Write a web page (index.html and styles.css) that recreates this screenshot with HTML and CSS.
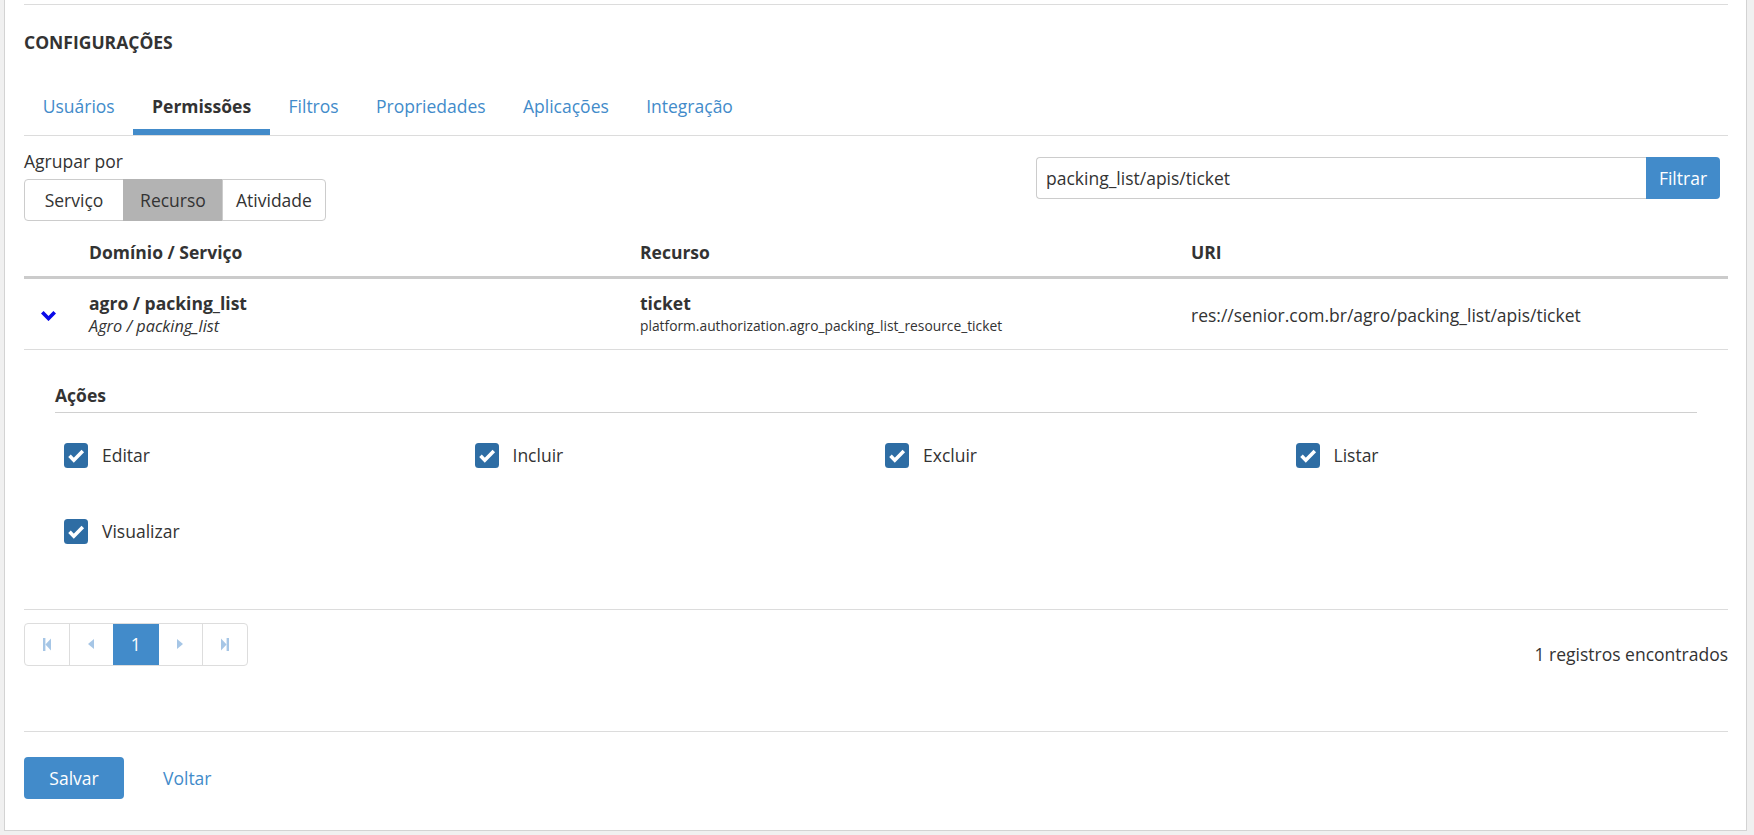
FILE: index.html
```html
<!DOCTYPE html>
<html lang="pt-BR">
<head>
<meta charset="utf-8">
<title>Configurações</title>
<link rel="stylesheet" href="styles.css">
</head>
<body>
<div class="panel">
  <div class="section">
    <h2 class="title">CONFIGURAÇÕES</h2>
    <nav class="tabs">
      <a class="tab">Usuários</a>
      <a class="tab active">Permissões</a>
      <a class="tab">Filtros</a>
      <a class="tab">Propriedades</a>
      <a class="tab">Aplicações</a>
      <a class="tab">Integração</a>
    </nav>

    <div class="toolbar">
      <div class="group-col">
        <div class="group-label">Agrupar por</div>
        <div class="btn-group">
          <span class="seg">Serviço</span>
          <span class="seg selected">Recurso</span>
          <span class="seg">Atividade</span>
        </div>
      </div>
      <div class="search">
        <div class="search-input">packing_list/apis/ticket</div>
        <span class="search-btn">Filtrar</span>
      </div>
    </div>

    <table class="grid">
      <colgroup>
        <col class="c-toggle">
        <col class="c-dom">
        <col class="c-res">
        <col>
      </colgroup>
      <thead>
        <tr>
          <th></th>
          <th>Domínio / Serviço</th>
          <th>Recurso</th>
          <th>URI</th>
        </tr>
      </thead>
      <tbody>
        <tr class="row">
          <td class="toggle">
            <svg class="chev" width="15" height="10" viewBox="0 0 15 10"><polygon points="0,2.6 2.6,0 7.5,4.9 12.4,0 15,2.6 7.5,10.1" fill="#0a0ae8"/></svg>
          </td>
          <td>
            <div class="strong">agro / packing_list</div>
            <div class="sub-it">Agro / packing_list</div>
          </td>
          <td>
            <div class="strong">ticket</div>
            <div class="sub-sm">platform.authorization.agro_packing_list_resource_ticket</div>
          </td>
          <td class="uri">res://senior.com.br/agro/packing_list/apis/ticket</td>
        </tr>
        <tr class="detail">
          <td colspan="4">
            <div class="detail-title">Ações</div>
            <div class="actions-grid">
              <label class="chk"><svg class="box" width="24" height="25" viewBox="0 0 24 25"><rect width="24" height="25" rx="3.5" fill="#2e6da4"/><polyline points="5.5,12.8 9.8,17.2 18.8,8" fill="none" stroke="#fff" stroke-width="3.6"/></svg><span>Editar</span></label>
              <label class="chk"><svg class="box" width="24" height="25" viewBox="0 0 24 25"><rect width="24" height="25" rx="3.5" fill="#2e6da4"/><polyline points="5.5,12.8 9.8,17.2 18.8,8" fill="none" stroke="#fff" stroke-width="3.6"/></svg><span>Incluir</span></label>
              <label class="chk"><svg class="box" width="24" height="25" viewBox="0 0 24 25"><rect width="24" height="25" rx="3.5" fill="#2e6da4"/><polyline points="5.5,12.8 9.8,17.2 18.8,8" fill="none" stroke="#fff" stroke-width="3.6"/></svg><span>Excluir</span></label>
              <label class="chk"><svg class="box" width="24" height="25" viewBox="0 0 24 25"><rect width="24" height="25" rx="3.5" fill="#2e6da4"/><polyline points="5.5,12.8 9.8,17.2 18.8,8" fill="none" stroke="#fff" stroke-width="3.6"/></svg><span>Listar</span></label>
              <label class="chk"><svg class="box" width="24" height="25" viewBox="0 0 24 25"><rect width="24" height="25" rx="3.5" fill="#2e6da4"/><polyline points="5.5,12.8 9.8,17.2 18.8,8" fill="none" stroke="#fff" stroke-width="3.6"/></svg><span>Visualizar</span></label>
            </div>
          </td>
        </tr>
      </tbody>
    </table>

    <div class="footer">
      <ul class="pager">
        <li><svg width="8" height="13" viewBox="0 0 8 13"><rect x="0" y="0" width="2.4" height="13" fill="#a6c6e6"/><polygon points="2.4,6.5 8,0.5 8,12.5" fill="#a6c6e6"/></svg></li>
        <li><svg width="6" height="10" viewBox="0 0 6 10"><polygon points="0,5 6,0 6,10" fill="#a6c6e6"/></svg></li>
        <li class="current">1</li>
        <li><svg width="6" height="10" viewBox="0 0 6 10"><polygon points="6,5 0,0 0,10" fill="#a6c6e6"/></svg></li>
        <li><svg width="8" height="13" viewBox="0 0 8 13"><rect x="5.6" y="0" width="2.4" height="13" fill="#a6c6e6"/><polygon points="5.6,6.5 0,0.5 0,12.5" fill="#a6c6e6"/></svg></li>
      </ul>
      <div class="count">1 registros encontrados</div>
    </div>

    <div class="form-actions">
      <span class="btn-primary">Salvar</span>
      <a class="link">Voltar</a>
    </div>
  </div>
</div>
</body>
</html>
```

FILE: styles.css
```css
* { box-sizing: border-box; }

html, body { height: 100%; }

body {
  margin: 0;
  padding: 0 7px 4px 4px;
  background: #f0f0f0;
  font-family: "Open Sans", "Liberation Sans", sans-serif;
  font-size: 17.5px;
  line-height: 24px;
  color: #333;
  overflow: hidden;
}

.panel {
  background: #fff;
  border: 1px solid #d3d3d3;
  border-top: 0;
  padding: 4px 18px 31px 19px;
}

.section {
  border-top: 1px solid #dcdcdc;
}

.title {
  margin: 0;
  padding-top: 25px;
  font-size: 17.5px;
  line-height: 24px;
  font-weight: 700;
  color: #333;
}

.tabs {
  display: flex;
  margin-top: 28px;
  border-bottom: 1px solid #dcdcdc;
}

.tab {
  padding: 11.5px 18.7px 11px;
  border-bottom: 6px solid transparent;
  color: #428bca;
  cursor: pointer;
}

.tab.active {
  color: #333;
  font-weight: 700;
  border-bottom-color: #428bca;
}

.toolbar {
  display: flex;
  align-items: flex-start;
  justify-content: space-between;
}

.group-col {
  padding-top: 13px;
}

.group-label {
  line-height: 24px;
}

.btn-group {
  display: flex;
  margin-top: 6px;
}

.seg {
  min-width: 100px;
  height: 42px;
  padding: 8px 13px;
  border: 1px solid #cccccc;
  text-align: center;
  background: #fff;
  color: #333;
}

.seg + .seg { margin-left: -1px; }

.seg:first-child { border-radius: 4px 0 0 4px; }
.seg:last-child { border-radius: 0 4px 4px 0; }

.seg.selected {
  background: #b3b3b3;
  border-color: #b3b3b3;
}

.search {
  display: flex;
  width: 684px;
  margin-top: 21px;
  margin-right: 8px;
}

.search-input {
  flex: 1;
  height: 42px;
  padding: 8px 9px;
  border: 1px solid #cccccc;
  border-right: 0;
  border-radius: 4px 0 0 4px;
  color: #333;
}

.search-btn {
  width: 74px;
  height: 42px;
  padding: 9px 0;
  background: #428bca;
  color: #fff;
  text-align: center;
  border-radius: 0 4px 4px 0;
}

.grid {
  width: 100%;
  margin-top: 7px;
  border-collapse: collapse;
  table-layout: fixed;
}

.c-toggle { width: 55px; }
.c-dom { width: 551px; }
.c-res { width: 551px; }

.grid th {
  text-align: left;
  font-weight: 700;
  padding: 12px 10px;
  border-bottom: 3px solid #cbcbcb;
}

.grid td {
  padding: 12px 10px;
  vertical-align: middle;
}

.row td {
  border-bottom: 1px solid #dcdcdc;
}

.toggle {
  padding-left: 17px !important;
}

.chev {
  display: block;
  margin-top: 4px;
}

.strong {
  font-weight: 700;
  line-height: 24px;
}

.sub-it {
  font-style: italic;
  font-size: 16.3px;
  line-height: 22px;
}

.sub-sm {
  font-size: 13.8px;
  line-height: 22px;
}

.uri {
  padding-top: 14px !important;
}

.detail td {
  padding: 33px 31px 65px;
  border-bottom: 1px solid #dcdcdc;
}

.detail-title {
  font-weight: 700;
  padding-bottom: 5px;
  border-bottom: 1px solid #d0d0d0;
}

.actions-grid {
  display: grid;
  grid-template-columns: repeat(4, 1fr);
  row-gap: 51px;
  margin-top: 30px;
}

.chk {
  display: flex;
  align-items: center;
  gap: 14px;
  height: 25px;
  padding-left: 9px;
}

.box { display: block; flex: none; }

.footer {
  display: flex;
  justify-content: space-between;
  align-items: flex-start;
  margin-top: 13px;
}

.pager {
  display: flex;
  margin: 0;
  padding: 0;
  list-style: none;
  border: 1px solid #dddddd;
  border-radius: 4px;
  overflow: hidden;
}

.pager li {
  width: 44.5px;
  height: 41px;
  display: flex;
  align-items: center;
  justify-content: center;
  border-left: 1px solid #dddddd;
}

.pager li:first-child {
  width: 43.5px;
  border-left: 0;
}

.pager li.current {
  background: #428bca;
  border-left-color: #428bca;
  color: #fff;
}

.pager li.current + li { border-left-color: #428bca; }

.count {
  margin-top: 19px;
}

.form-actions {
  display: flex;
  align-items: center;
  margin-top: 65px;
  padding-top: 25px;
  border-top: 1px solid #dcdcdc;
}

.btn-primary {
  width: 100px;
  height: 42px;
  padding: 9px 0;
  background: #428bca;
  color: #fff;
  text-align: center;
  border-radius: 4px;
}

.link {
  margin-left: 39px;
  color: #428bca;
  cursor: pointer;
}
```
